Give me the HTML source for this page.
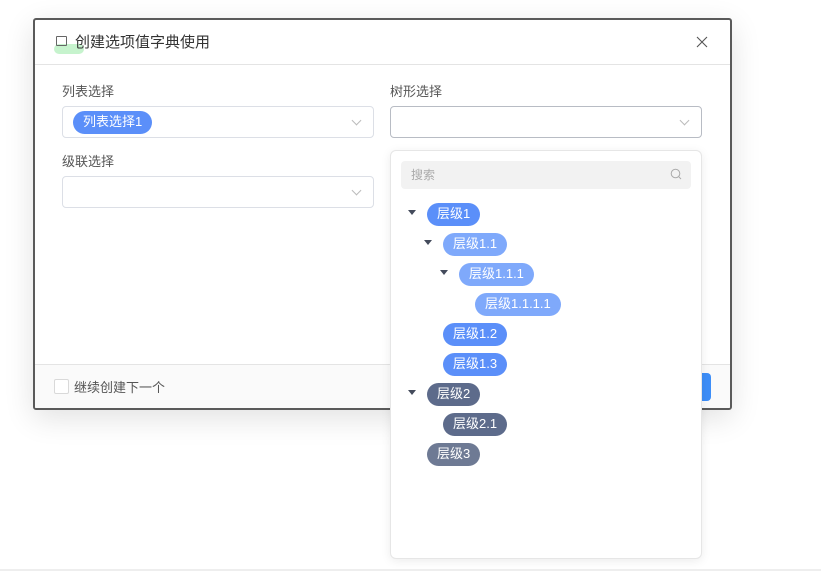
<!DOCTYPE html>
<html><head><meta charset="utf-8"><style>
*{box-sizing:border-box;margin:0;padding:0}
body{width:821px;height:571px;background:#fff;position:relative;overflow:hidden;font-family:"Liberation Sans","Noto Sans CJK SC",sans-serif;}
.abs{position:absolute}
.dlg{left:33px;top:18px;width:699px;height:392px;border:2px solid #5a5a5a;border-radius:3px;background:#fff;box-shadow:0 8px 30px rgba(0,0,0,.12);overflow:hidden}
.lbl{font-size:13px;color:#555}
.inp{border:1px solid #dcdfe6;border-radius:4px;background:#fff}
.chev{width:7px;height:7px;border-right:1px solid #bbb;border-bottom:1px solid #bbb;transform:rotate(45deg)}
.tag{height:23px;border-radius:12px;color:#fff;font-size:13px;line-height:22px;padding:0 10px;white-space:nowrap}
.tri{width:0;height:0;border-left:4px solid transparent;border-right:4px solid transparent;border-top:5px solid #444b5c}
</style></head><body>
<div class="abs dlg">
  <div class="abs" style="left:0;top:44px;width:100%;height:1px;background:#e4e4e4"></div>
  <div class="abs" style="left:19px;top:24px;width:30px;height:10px;border-radius:5px;background:#b8f0c0;opacity:.8"></div>
  <div class="abs" style="left:21px;top:16px;width:11px;height:10px;border:1.5px solid #666;border-radius:1px"></div>
  <div class="abs" style="left:40px;top:11px;font-size:15px;color:#333">创建选项值字典使用</div>
  <svg class="abs" style="left:661px;top:16px" width="12" height="12"><path d="M1 1L11 11M11 1L1 11" stroke="#555" stroke-width="1.1"/></svg>
  <div class="abs lbl" style="left:27px;top:61px">列表选择</div>
  <div class="abs inp" style="left:27px;top:86px;width:312px;height:32px"></div>
  <div class="abs tag" style="left:38px;top:91px;background:#5b8ff9">列表选择1</div>
  <div class="abs chev" style="left:318px;top:97px"></div>
  <div class="abs lbl" style="left:355px;top:61px">树形选择</div>
  <div class="abs inp" style="left:355px;top:86px;width:312px;height:32px;border-color:#b8bcc4"></div>
  <div class="abs chev" style="left:646px;top:97px"></div>
  <div class="abs lbl" style="left:27px;top:131px">级联选择</div>
  <div class="abs inp" style="left:27px;top:156px;width:312px;height:32px"></div>
  <div class="abs chev" style="left:318px;top:167px"></div>
  <div class="abs" style="left:0;top:344px;width:100%;height:48px;background:#fafafa;border-top:1px solid #e4e4e4"></div>
  <div class="abs" style="left:19px;top:359px;width:15px;height:15px;border:1px solid #d9d9d9;border-radius:2px;background:#fff"></div>
  <div class="abs" style="left:39px;top:357px;font-size:13px;color:#555">继续创建下一个</div>
  <div class="abs" style="left:640px;top:353px;width:36px;height:28px;border-radius:4px;background:#3d8ef8"></div>
</div>
<div class="abs" style="left:390px;top:150px;width:312px;height:409px;background:#fff;border:1px solid #e6e6e6;border-radius:6px;box-shadow:0 2px 10px rgba(0,0,0,.08)">
  <div class="abs" style="left:10px;top:10px;width:290px;height:28px;background:#f2f2f2;border-radius:4px"></div>
  <div class="abs" style="left:20px;top:15px;font-size:12px;color:#aaa">搜索</div>
  <svg class="abs" style="left:279px;top:17px" width="13" height="13"><circle cx="5.5" cy="5.5" r="4.3" fill="none" stroke="#aaa" stroke-width="1"/><path d="M8.7 8.7L11 11" stroke="#aaa"/></svg>
  <div class="abs tri" style="left:17px;top:59px"></div>
  <div class="abs tag" style="left:36px;top:52px;background:#5b8ff9">层级1</div>
  <div class="abs tri" style="left:33px;top:89px"></div>
  <div class="abs tag" style="left:52px;top:82px;background:#7fa9fb">层级1.1</div>
  <div class="abs tri" style="left:49px;top:119px"></div>
  <div class="abs tag" style="left:68px;top:112px;background:#7fa9fb">层级1.1.1</div>
  <div class="abs tag" style="left:84px;top:142px;background:#7fa9fb">层级1.1.1.1</div>
  <div class="abs tag" style="left:52px;top:172px;background:#5b8ff9">层级1.2</div>
  <div class="abs tag" style="left:52px;top:202px;background:#5b8ff9">层级1.3</div>
  <div class="abs tri" style="left:17px;top:239px"></div>
  <div class="abs tag" style="left:36px;top:232px;background:#5d6b8b">层级2</div>
  <div class="abs tag" style="left:52px;top:262px;background:#5d6b8b">层级2.1</div>
  <div class="abs tag" style="left:36px;top:292px;background:#6e7a94">层级3</div>
</div>
<div class="abs" style="left:0;top:569px;width:821px;height:2px;background:#eee"></div>
</body></html>
